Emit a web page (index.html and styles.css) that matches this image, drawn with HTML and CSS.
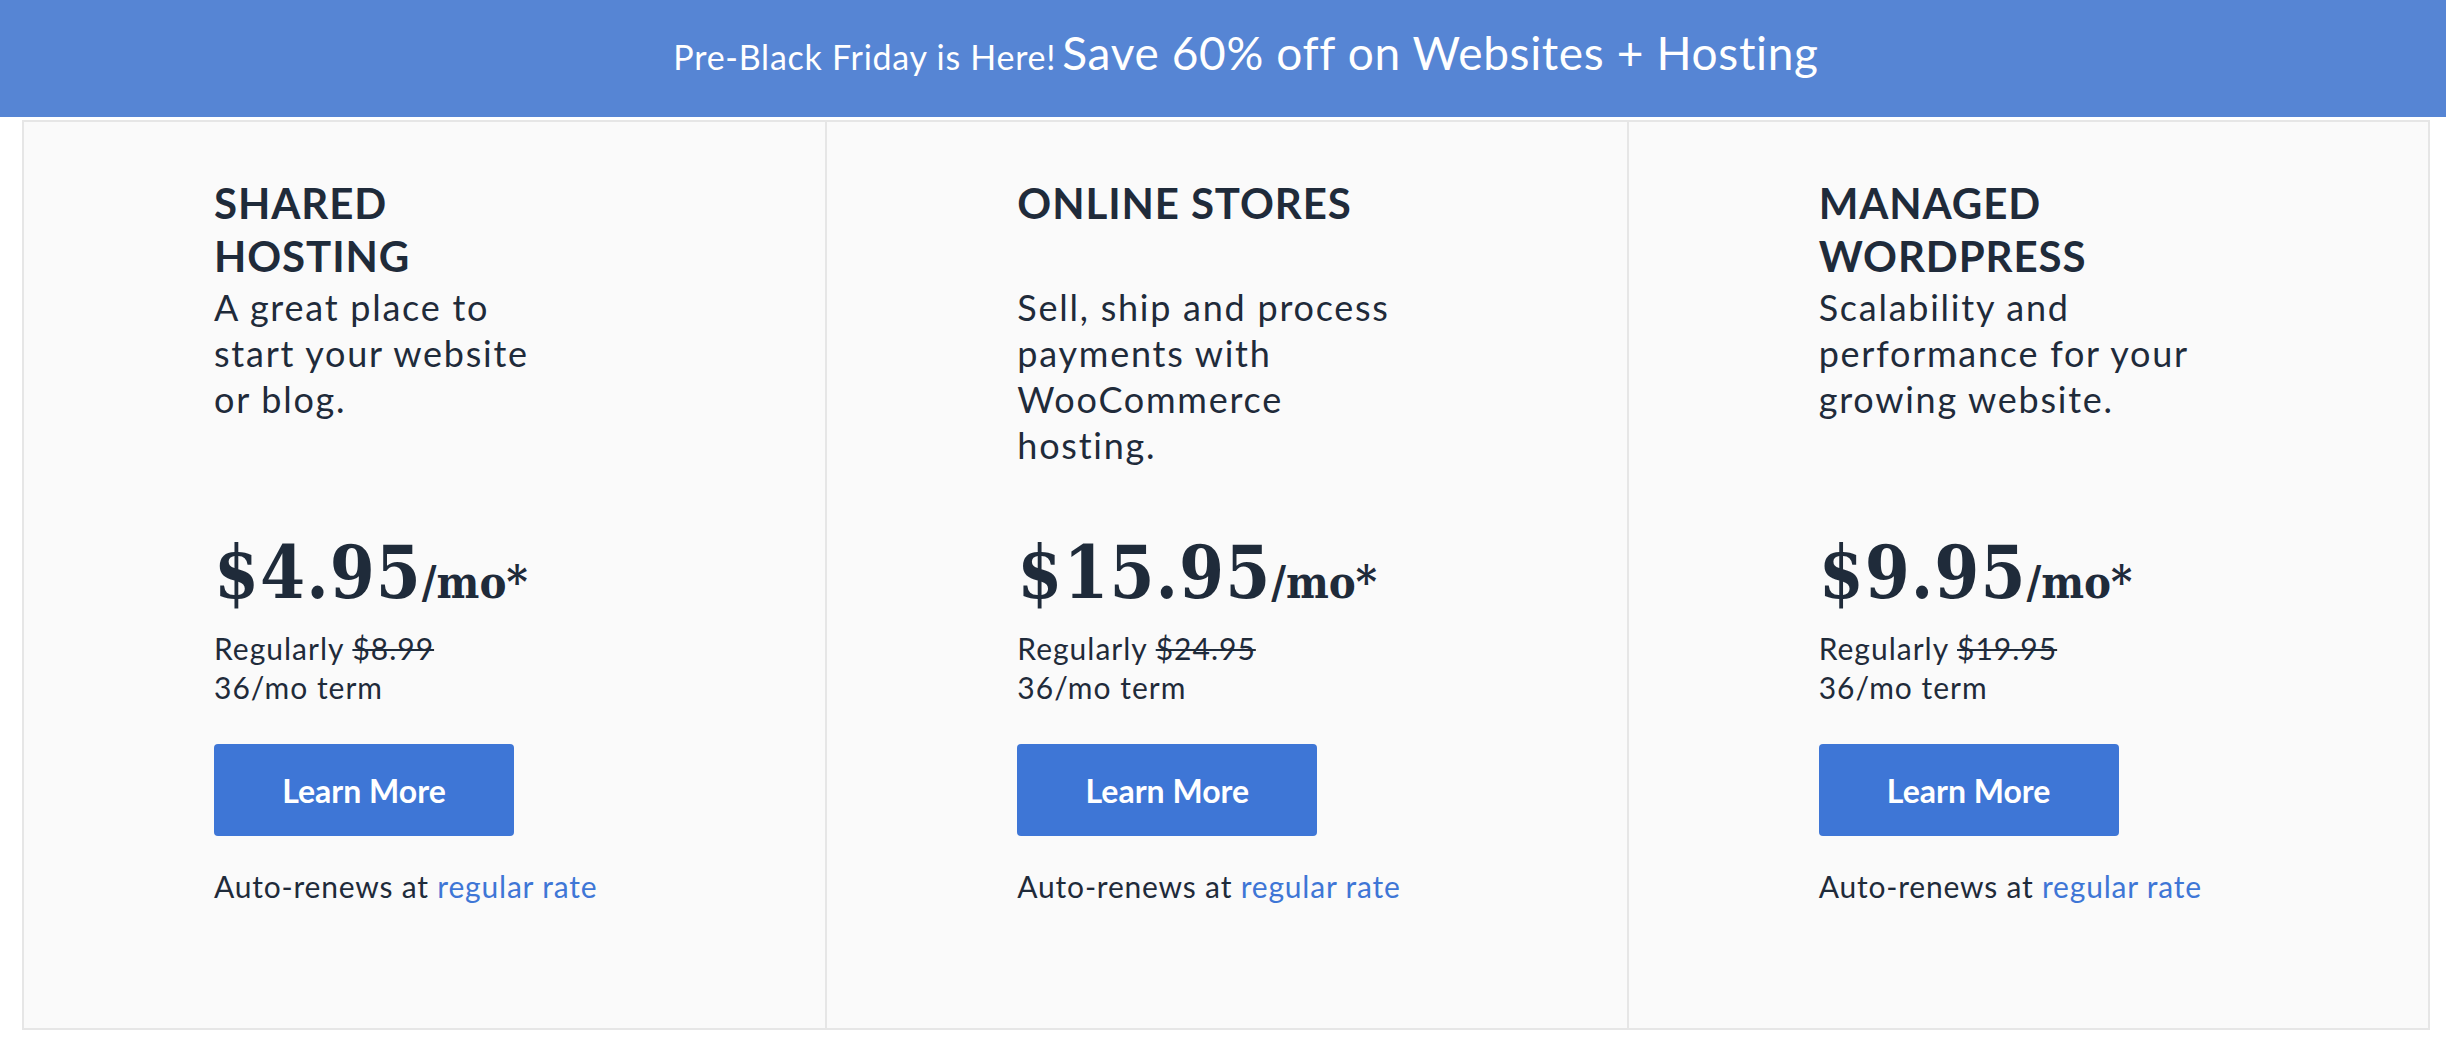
FILE: index.html
```html
<!DOCTYPE html>
<html lang="en">
<head>
<meta charset="utf-8">
<title>Hosting Plans</title>
<link rel="stylesheet" href="styles.css">
</head>
<body>
<div class="banner">
  <span class="banner-small">Pre-Black Friday is Here!</span>
  <span class="banner-big">Save 60% off on Websites + Hosting</span>
</div>
<div class="plans">
  <div class="plan">
    <h2 class="plan-title">SHARED<br>HOSTING</h2>
    <p class="plan-desc">A great place to<br>start your website<br>or blog.</p>
    <div class="price">$4.95<span class="per">/mo*</span></div>
    <p class="regular">Regularly <s>$8.99</s><br>36/mo term</p>
    <a class="btn" href="#">Learn More</a>
    <p class="renew">Auto-renews at <a href="#">regular rate</a></p>
  </div>
  <div class="plan">
    <h2 class="plan-title">ONLINE STORES</h2>
    <p class="plan-desc">Sell, ship and process<br>payments with<br>WooCommerce<br>hosting.</p>
    <div class="price">$15.95<span class="per">/mo*</span></div>
    <p class="regular">Regularly <s>$24.95</s><br>36/mo term</p>
    <a class="btn" href="#">Learn More</a>
    <p class="renew">Auto-renews at <a href="#">regular rate</a></p>
  </div>
  <div class="plan">
    <h2 class="plan-title">MANAGED<br>WORDPRESS</h2>
    <p class="plan-desc">Scalability and<br>performance for your<br>growing website.</p>
    <div class="price">$9.95<span class="per">/mo*</span></div>
    <p class="regular">Regularly <s>$19.95</s><br>36/mo term</p>
    <a class="btn" href="#">Learn More</a>
    <p class="renew">Auto-renews at <a href="#">regular rate</a></p>
  </div>
</div>
</body>
</html>
```

FILE: styles.css
```css
* { box-sizing: border-box; }
html, body { margin: 0; padding: 0; background: #ffffff; }
body { font-family: "Lato", "Open Sans", sans-serif; color: #1f2b3a; }

.banner {
  height: 117px;
  background: #5685d4;
  color: #ffffff;
  text-align: center;
  padding: 26px 0 0 46px;
  line-height: 54px;
  white-space: nowrap;
  margin-bottom: 3px;
}
.banner-small { font-size: 34px; font-weight: 400; letter-spacing: 0.75px; }
.banner-big { font-size: 46px; font-weight: 400; letter-spacing: 0.65px; margin-left: 2px; }

.plans {
  margin-left: 22px;
  width: 2408px;
  height: 910px;
  border: 2px solid #e6e6e6;
  background: #fafafa;
  display: grid;
  grid-template-columns: 1fr 1fr 1fr;
}
.plan {
  padding: 55px 0 0 190px;
  display: flex;
  flex-direction: column;
  align-items: flex-start;
}
.plan + .plan { border-left: 2px solid #e6e6e6; }

.plan-title {
  margin: 0;
  font-size: 42px;
  line-height: 53px;
  font-weight: 700;
  min-height: 106px;
  letter-spacing: 0.9px;
  white-space: nowrap;
}
.plan-desc {
  margin: 1px 0 0;
  font-size: 36px;
  line-height: 46px;
  letter-spacing: 1.75px;
  min-height: 186px;
  white-space: nowrap;
}
.price {
  margin-top: 58px;
  font-family: "DejaVu Serif Condensed", "DejaVu Serif", serif;
  font-stretch: condensed;
  font-weight: 700;
  font-size: 72px;
  line-height: 90px;
  letter-spacing: 1px;
  white-space: nowrap;
}
.per { font-size: 45px; line-height: 1; letter-spacing: 0; }
.regular {
  margin: 11px 0 0;
  font-size: 30px;
  line-height: 39px;
  letter-spacing: 1px;
}
.regular s { text-decoration-thickness: 2px; }
.btn {
  margin-top: 37px;
  width: 300px;
  height: 92px;
  border-radius: 4px;
  background: #3e76d6;
  color: #ffffff;
  text-decoration: none;
  font-weight: 700;
  font-size: 32px;
  display: flex;
  align-items: center;
  justify-content: center;
}
.renew {
  margin: 30px 0 0;
  font-size: 30px;
  line-height: 40px;
  letter-spacing: 0.8px;
}
.renew a { color: #3e76d6; text-decoration: none; }
```
